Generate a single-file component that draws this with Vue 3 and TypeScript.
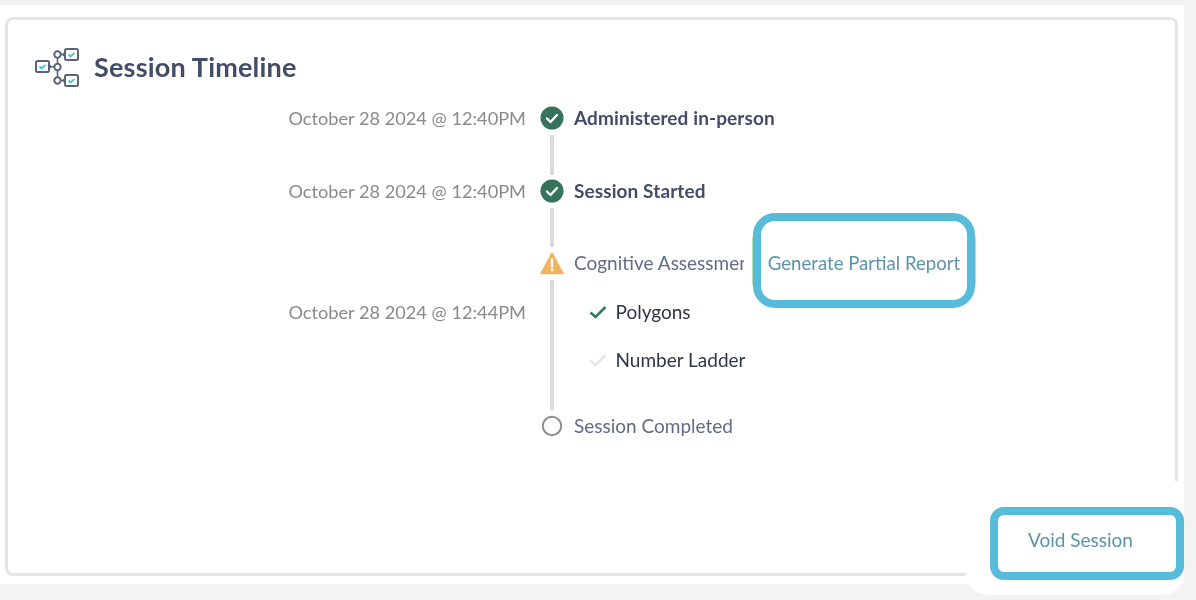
<script setup lang="ts">
interface Sub { label: string; done: boolean; time?: string }
const subs: Sub[] = [
  { label: 'Polygons', done: true, time: 'October 28 2024 @ 12:44PM' },
  { label: 'Number Ladder', done: false },
]
</script>

<template>
  <div class="page">
    <div class="panel">
      <section class="card">
        <header class="head">
          <svg class="head-icon" viewBox="0 0 46 40" width="46" height="40" fill="none" stroke="#5b6479" stroke-width="2">
            <rect x="1" y="14" width="13" height="11" rx="1.5" />
            <path d="M14 17.5l2 2-2 2" stroke-width="1.6" />
            <rect x="30" y="2" width="13" height="11" rx="1.5" />
            <path d="M30 5.5l-2 2 2 2" stroke-width="1.6" />
            <rect x="30" y="28" width="13" height="11" rx="1.5" />
            <path d="M30 31.5l-2 2 2 2" stroke-width="1.6" />
            <circle cx="22.5" cy="7.5" r="3.2" />
            <circle cx="22.5" cy="20" r="3.2" />
            <circle cx="22.5" cy="33.5" r="3.2" />
            <path d="M22.5 10.7v6.1M22.5 23.2v7.1M16 19.8h3.3M25.7 7.5h2.3M25.7 33.5h2.3" stroke-width="1.6" />
            <path d="M4.5 19.5l2 2 4-3.5M33.5 7.5l2 2 4-3.5M33.5 33.5l2 2 4-3.5" stroke="#4fc3e3" stroke-width="2" />
          </svg>
          <h2 class="title">Session Timeline</h2>
        </header>

        <div class="timeline">
          <span class="time r1">October 28 2024 @ 12:40PM</span>
          <svg class="marker r1" viewBox="0 0 24 24" width="24" height="24">
            <circle cx="12" cy="12" r="11.5" fill="#35735a" />
            <path d="M7 12.5l3.5 3.5 6.5-7" fill="none" stroke="#fff" stroke-width="2.4" stroke-linecap="round" stroke-linejoin="round" />
          </svg>
          <strong class="label strong r1">Administered in-person</strong>

          <i class="line r2"></i>

          <span class="time r3">October 28 2024 @ 12:40PM</span>
          <svg class="marker r3" viewBox="0 0 24 24" width="24" height="24">
            <circle cx="12" cy="12" r="11.5" fill="#35735a" />
            <path d="M7 12.5l3.5 3.5 6.5-7" fill="none" stroke="#fff" stroke-width="2.4" stroke-linecap="round" stroke-linejoin="round" />
          </svg>
          <strong class="label strong r3">Session Started</strong>

          <i class="line r4"></i>

          <svg class="marker r5" viewBox="0 0 24 24" width="24" height="24">
            <path d="M12 2L23 22.5H1z" fill="#f1b45e" stroke="#f1b45e" stroke-width="1.5" stroke-linejoin="round" />
            <path d="M12 8.5v7" stroke="#fff" stroke-width="2.4" stroke-linecap="round" />
            <circle cx="12" cy="19" r="1.4" fill="#fff" />
          </svg>
          <div class="assess r5">
            <span class="label clip">Cognitive Assessment</span>
            <button class="highlight partial" type="button">Generate Partial Report</button>
          </div>

          <i class="line long"></i>

          <template v-for="(s, i) in subs" :key="s.label">
            <span v-if="s.time" class="time sub-time" :class="i === 0 ? 'r6' : 'r7'">{{ s.time }}</span>
            <div class="sub" :class="i === 0 ? 'r6' : 'r7'">
              <svg class="tick" viewBox="0 0 18 14" width="18" height="14">
                <path d="M1.5 7.5l5 4.5L16.5 2" fill="none" :stroke="s.done ? '#35795f' : '#e6e6e6'" stroke-width="2.6" />
              </svg>
              <span class="sub-text">{{ s.label }}</span>
            </div>
          </template>

          <svg class="marker r8" viewBox="0 0 24 24" width="24" height="24">
            <circle cx="12" cy="12" r="9.2" fill="#fff" stroke="#8d8d8d" stroke-width="2" />
          </svg>
          <span class="label r8">Session Completed</span>
        </div>
      </section>

      <div class="void-wrap">
        <button class="highlight void" type="button">Void Session</button>
      </div>
    </div>
  </div>
</template>

<style>
html, body { margin: 0; background: #f3f3f3; }
</style>

<style scoped>
.page {
  height: 600px;
  width: 1196px;
  overflow: hidden;
  padding-top: 5px;
  box-sizing: border-box;
  background: #f3f3f3;
  font-family: Lato, "Open Sans", sans-serif;
  filter: blur(0.4px);
}
.panel {
  position: relative;
  width: 1184px;
  height: 579px;
  background: #fff;
  padding: 12px 6px 8px 5px;
  box-sizing: border-box;
}
.card {
  height: 559px;
  box-sizing: border-box;
  border: 3px solid #e5e5e5;
  border-radius: 8px;
  padding: 24px 0 0 25px;
}
.head { display: flex; align-items: center; gap: 13px; height: 45px; padding-left: 2px; }
.head-icon { display: block; }
.title {
  margin: 0;
  font-size: 27px;
  font-weight: 700;
  color: #434d68;
  letter-spacing: 0.2px;
}
.timeline {
  display: grid;
  grid-template-columns: 507px 24px auto;
  grid-template-rows: 24px 49px 24px 48px 24px 61px 80px 20px;
  margin-top: 17px;
}
.r1 { grid-row: 1; }
.r2 { grid-row: 2; }
.r3 { grid-row: 3; }
.r4 { grid-row: 4; }
.r5 { grid-row: 5; }
.r6 { grid-row: 6; }
.r7 { grid-row: 7; }
.r8 { grid-row: 8; }
.time {
  grid-column: 1;
  justify-self: end;
  align-self: center;
  font-size: 18.2px;
  color: #8a8a8a;
  white-space: nowrap;
  padding-right: 14px;
}
.sub-time { align-self: end; line-height: 48px; }
.marker { grid-column: 2; display: block; align-self: center; }
.line {
  grid-column: 2;
  justify-self: center;
  width: 4px;
  background: #dcdcdc;
  margin: 5px 0 4px;
}
.long { grid-row: 6 / span 2; margin: 5px 0 6px; }
.label {
  grid-column: 3;
  align-self: center;
  padding: 0 0 2px 10px;
  font-size: 19px;
  color: #626b85;
  white-space: nowrap;
}
.strong { font-weight: 700; color: #434d68; font-size: 19px; letter-spacing: 0.1px; }
.assess {
  grid-column: 3;
  display: flex;
  align-items: center;
  height: 24px;
}
.clip {
  display: block;
  box-sizing: border-box;
  width: 180px;
  overflow: hidden;
  flex: none;
}
.highlight {
  position: relative;
  flex: none;
  box-sizing: border-box;
  background: #fff;
  border: 8px solid #57bcd9;
  color: #5c93ab;
  font: 400 18.6px Lato, "Open Sans", sans-serif;
  padding: 0;
}
.partial {
  width: 222px;
  height: 95px;
  margin: -5px 0 0 9px;
  padding-top: 4px;
  border-radius: 22px;
}
.partial::before {
  content: "";
  position: absolute;
  inset: 16px -9px 15px;
  border-left: 1px solid #b4e2b0;
  border-right: 1px solid #b4e2b0;
}
.sub {
  grid-column: 3;
  display: flex;
  align-items: center;
  gap: 9px;
  height: 48px;
  padding-left: 25px;
  font-size: 19px;
  color: #2f3547;
}
.sub-text { padding-bottom: 2px; margin-left: -0.5px; }
.r6.sub { align-self: end; }
.r7.sub { align-self: start; }
.tick { display: block; flex: none; }
.void-wrap {
  position: absolute;
  right: 0;
  bottom: -11px;
  width: 218px;
  height: 114px;
  background: #fff;
  border-radius: 0 0 22px 22px;
  display: flex;
  align-items: flex-start;
  justify-content: flex-end;
  padding-top: 26px;
  box-sizing: border-box;
}
.void {
  width: 194px;
  height: 73px;
  border-radius: 14px;
  padding: 0 13px 8px 0;
  font-size: 19px;
}
</style>
